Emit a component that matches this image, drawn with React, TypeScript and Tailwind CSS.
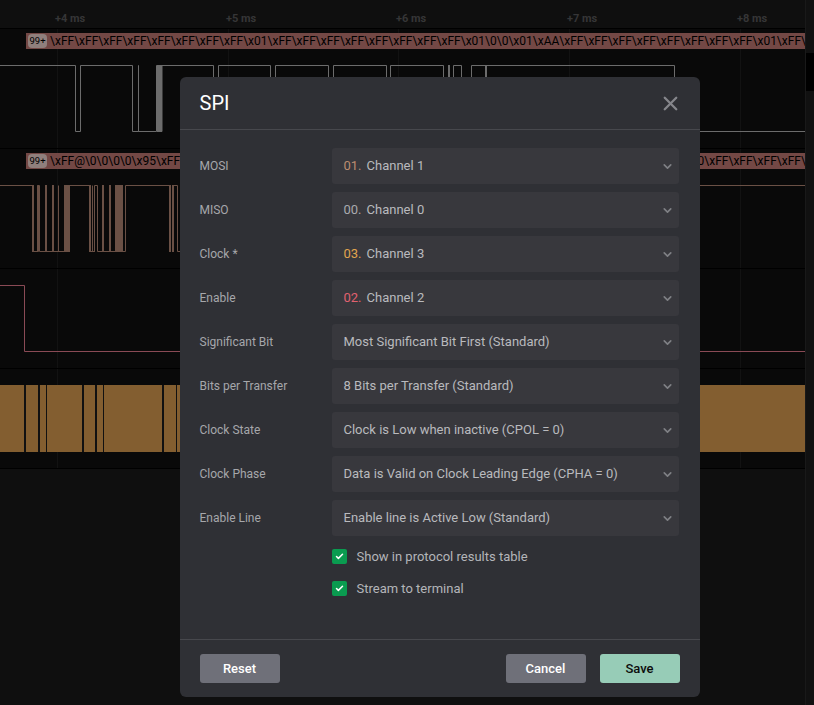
import { Check, ChevronDown, X } from "lucide-react";

const ticks = [
  { label: "+4 ms", x: 55 },
  { label: "+5 ms", x: 226 },
  { label: "+6 ms", x: 396 },
  { label: "+7 ms", x: 567 },
  { label: "+8 ms", x: 737 },
];

const gridLines = [57, 228, 398, 569, 740];

const fields = [
  { label: "MOSI", num: "01.", numClass: "text-[#bc8d70]", value: "Channel 1" },
  { label: "MISO", num: "00.", numClass: "text-[#a9aaae]", value: "Channel 0" },
  { label: "Clock *", num: "03.", numClass: "text-[#e0a44e]", value: "Channel 3" },
  { label: "Enable", num: "02.", numClass: "text-[#e0616f]", value: "Channel 2" },
  { label: "Significant Bit", value: "Most Significant Bit First (Standard)" },
  { label: "Bits per Transfer", value: "8 Bits per Transfer (Standard)" },
  { label: "Clock State", value: "Clock is Low when inactive (CPOL = 0)" },
  { label: "Clock Phase", value: "Data is Valid on Clock Leading Edge (CPHA = 0)" },
  { label: "Enable Line", value: "Enable line is Active Low (Standard)" },
];

const ff = (n: number) => "\\xFF".repeat(n);

const bytes1 = ff(8) + "\\x01" + ff(8) + "\\x01\\0\\0\\x01\\xAA" + ff(8) + "\\x01" + ff(2);
const bytes2 = "\\xFF@\\0\\0\\0\\0\\x95" + ff(20) + "\\x01\\t\\t\\0\\0" + ff(5);

const orangeGaps = [
  [24, 2],
  [38, 2],
  [46, 1],
  [82, 2],
  [95, 2],
  [103, 1],
  [162, 2],
  [176, 1],
];

const pinkBars = [
  [32, 2],
  [45, 2],
  [52, 2],
  [64, 6],
  [89, 2],
  [102, 2],
  [109, 2],
  [115, 8],
  [169, 2],
  [172, 2],
];

function Tag({ text }: { text: string }) {
  return (
    <div className="flex h-4 ml-[26px] items-center overflow-hidden whitespace-nowrap bg-[#734845] text-xs text-black">
      <span className="ml-[2px] mr-[3px] flex h-[14px] w-[19px] shrink-0 items-center justify-center rounded-[4px] bg-[#8f7f7c] text-[9.5px]">
        99+
      </span>
      {text}
    </div>
  );
}

function Field({ label, num, numClass, value }: (typeof fields)[number]) {
  return (
    <div className="flex items-center">
      <div className="w-[132px] -translate-x-[0.5px] text-xs text-[#a6a7ab]">{label}</div>
      <div className="flex h-9 w-[347px] items-center rounded-[3px] bg-[#38383d] pl-[11.5px] pr-[5.5px] text-[13px] text-[#b9babd]">
        {num && <span className={`mr-[5px] ${numClass}`}>{num}</span>}
        <span className="flex-1">{value}</span>
        <ChevronDown size={13} strokeWidth={3} className="text-[#7f8085]" />
      </div>
    </div>
  );
}

function CheckRow({ label }: { label: string }) {
  return (
    <div className="flex h-4 items-center">
      <span className="flex h-[15px] w-[15px] items-center justify-center rounded-[2px] bg-[#0a9b50]">
        <Check size={9} strokeWidth={4} className="text-white" />
      </span>
      <span className="ml-[9.5px] pt-[2px] text-[13px] text-[#b4b5b9]">{label}</span>
    </div>
  );
}

export default function App() {
  return (
    <div className="relative flex h-[705px] w-[814px] overflow-hidden bg-[#0f0f0f] font-['Roboto',sans-serif]">
      <main className="w-[805px]">
        <div className="relative h-7">
          {ticks.map((t) => (
            <span
              key={t.label}
              style={{ left: t.x }}
              className="absolute top-[12px] text-[11px] font-bold leading-[14px] text-[#363637]"
            >
              {t.label}
            </span>
          ))}
        </div>

        <div className="relative border-t border-black bg-[#090909]">
          {gridLines.map((x) => (
            <div key={x} style={{ left: x }} className="absolute inset-y-0 w-px bg-[#121212]" />
          ))}

          <section className="relative h-[120px] border-b border-black pt-1">
            <Tag text={bytes1} />
            <svg width="805" height="68" className="mt-4 block" fill="none" stroke="#6c6c6c">
              <path d="M0 .5H75.5V66.5H80.5V.5H132.5V66.5H138.5V.5V66.5H156.5V.5H162V66.5" />
              <rect x="157" y="0" width="5" height="67" fill="#6c6c6c" stroke="none" />
              <path d="M162 .5H213.5V66.5H218.5V.5H270.5V66.5H275.5V.5H328.5V66.5H333.5V.5H386.5V66.5H390.5V.5H443.5V66.5H453.5V.5H461.5V66.5H471.5V.5H485M487 .5H674.5V66.5H805" />
              <rect x="448" y="0" width="2" height="67" fill="#6c6c6c" stroke="none" />
              <rect x="485" y="0" width="2" height="67" fill="#6c6c6c" stroke="none" />
            </svg>
          </section>

          <section className="relative h-[120px] border-b border-black pt-1">
            <Tag text={bytes2} />
            <svg width="805" height="68" className="mt-4 block" fill="none" stroke="#6a5045">
              {pinkBars.map(([x, w]) => (
                <rect key={x} x={x} y="0" width={w} height="67" fill="#6a5045" stroke="none" />
              ))}
              <path d="M0 .5H33M33 66.5H38.5V.5H37.5V66.5M39.5 .5V66.5H70M39.5 .5H37.5M58.5 .5V66.5M70 .5H90M89.5 66.5H95M92.5 .5V66.5M94.5 66.5V.5H97.5V66.5H125.5V.5H169M172 .5H177.5V66.5H181M700 .5H805" />
            </svg>
          </section>

          <section className="relative h-[100px] border-b border-black pt-4">
            <svg width="805" height="67" className="block" fill="none" stroke="#8a4a55">
              <path d="M0 .5H24.5V66.5H805" />
            </svg>
          </section>

          <section className="relative h-[100px] border-b border-black pt-4">
            <div className="relative h-[67px] bg-[#835e30]">
              {orangeGaps.map(([x, w]) => (
                <div key={x} style={{ left: x, width: w }} className="absolute inset-y-0 bg-[#111111]" />
              ))}
            </div>
          </section>
        </div>
      </main>

      <aside className="relative w-[9px] border-l border-[#191919] bg-[#111111]">
        <div className="absolute top-[53px] h-[38px] w-full bg-black" />
      </aside>

      <div className="absolute left-[180px] top-[77px] flex h-[620px] w-[520px] flex-col rounded-md bg-[#2f3035]">
        <header className="flex h-[53px] shrink-0 items-center justify-between border-b border-[#47484d] pl-5 pr-[18.5px]">
          <h1 className="-translate-x-[0.5px] text-xl text-white">SPI</h1>
          <X size={23} strokeWidth={2.4} className="text-[#85868b]" />
        </header>

        <div className="flex flex-1 flex-col px-5 pt-[18px]">
          <div className="flex flex-col gap-2">
            {fields.map((f) => (
              <Field key={f.label} {...f} />
            ))}
          </div>
          <div className="ml-[132px] mt-3 flex flex-col gap-4">
            <CheckRow label="Show in protocol results table" />
            <CheckRow label="Stream to terminal" />
          </div>
        </div>

        <footer className="flex h-[58px] shrink-0 items-center border-t border-[#47484d] px-5 pb-[1px] text-[13px] font-medium">
          <button className="h-[29px] w-20 rounded-[3px] bg-[#6f7079] pt-[2px] pr-px text-white">Reset</button>
          <button className="ml-auto h-[29px] w-20 rounded-[3px] bg-[#6f7079] pt-[2px] pr-px text-white">Cancel</button>
          <button className="ml-[14px] h-[29px] w-20 rounded-[3px] bg-[#97ccb7] pt-[2px] pr-px text-[#0c0c0c]">Save</button>
        </footer>
      </div>
    </div>
  );
}
